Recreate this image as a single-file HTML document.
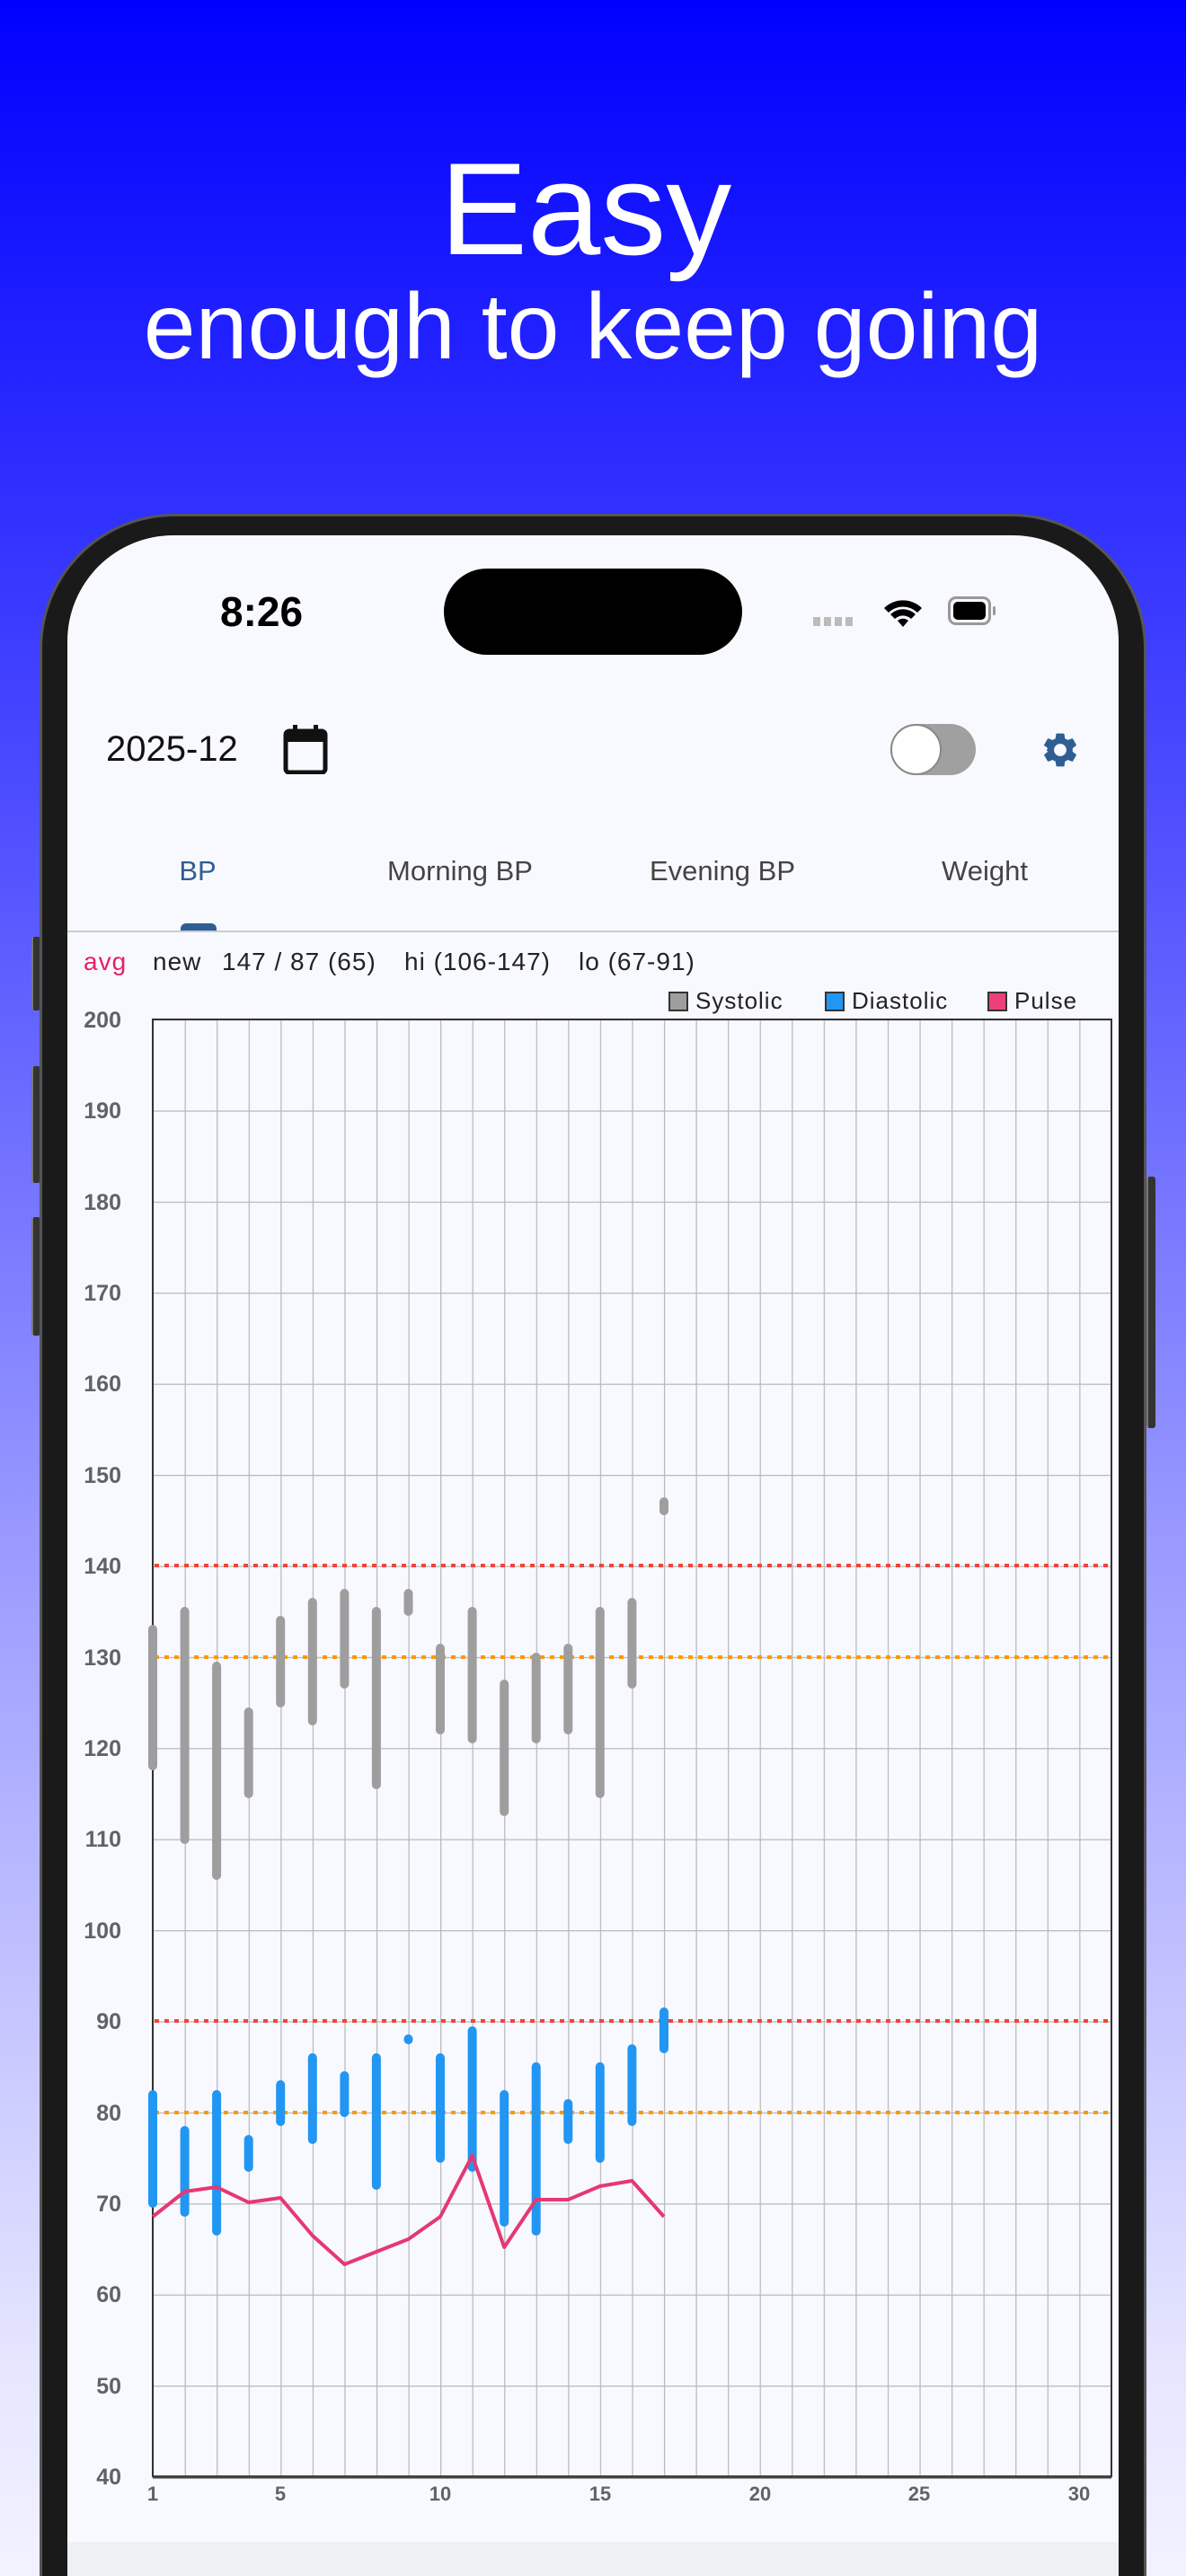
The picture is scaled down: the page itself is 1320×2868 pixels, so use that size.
<!DOCTYPE html>
<html style="width:1320px;height:2868px;overflow:hidden"><head><meta charset="utf-8"><style>
*{margin:0;padding:0;box-sizing:border-box}
html,body{width:1320px;height:2868px;overflow:hidden}
body{position:relative;background:#fff;font-family:"Liberation Sans",sans-serif}
.bg{position:absolute;left:0;top:0;width:1320px;height:2868px;background:linear-gradient(180deg,#0000ff 0%,#4a4aff 30%,#9a9aff 60%,#e6e6ff 92%,#f2f2ff 100%)}
.h1{position:absolute;left:0;width:1320px;text-align:center;color:#fff;font-weight:300}
.frame{position:absolute;left:44px;top:572px;width:1232px;height:2296px;border-radius:150px 150px 0 0;background:#1a1a1a;border:3px solid #555;border-bottom:none}
.screen{position:absolute;left:75px;top:596px;width:1170px;height:2272px;border-radius:118px 118px 0 0;background:#f8f9fe;overflow:hidden}
.btn{position:absolute;left:35px;width:10px;background:#333;border-radius:3px;border-left:2px solid #777}
.t{position:absolute;white-space:nowrap}
.lg{position:absolute;top:1099px;font-size:26px;color:#222;letter-spacing:1px;white-space:nowrap}
.lg i{display:inline-block;width:22px;height:22px;border:2px solid #333;vertical-align:-3px;margin-right:8px}
</style></head><body>
<div class="bg"></div>
<div class="h1" style="top:148px;font-size:146px;line-height:170px;left:-8px">Easy</div>
<div class="h1" style="top:304px;font-size:104px;line-height:120px">enough to keep going</div>
<div class="btn" style="top:1043px;height:82px"></div>
<div class="btn" style="top:1187px;height:130px"></div>
<div class="btn" style="top:1355px;height:132px"></div>
<div class="btn" style="left:1276px;top:1310px;height:280px"></div>
<div class="frame"></div>
<div class="screen">
 <div class="t" style="left:170px;top:58px;font-size:46px;font-weight:bold;color:#000">8:26</div>
 <div style="position:absolute;left:419px;top:37px;width:332px;height:96px;border-radius:48px;background:#000"></div>
 <div style="position:absolute;left:830px;top:91px;width:44px;height:10px;background:repeating-linear-gradient(90deg,#bbb 0 8px,transparent 8px 12px)"></div>
 <svg style="position:absolute;left:905px;top:66px" width="50" height="38" viewBox="0 0 50 38"><path d="M25 36 L19 29 A9 9 0 0 1 31 29 Z M4 15 A30 30 0 0 1 46 15 L41 20 A23 23 0 0 0 9 20Z M11 22 A20 20 0 0 1 39 22 L34 27 A13 13 0 0 0 16 27Z" fill="#000"/></svg>
 <div style="position:absolute;left:980px;top:68px;width:48px;height:32px;border:3px solid #999;border-radius:9px;padding:3px"><div style="width:100%;height:100%;background:#000;border-radius:5px"></div></div>
 <div style="position:absolute;left:1030px;top:79px;width:3px;height:10px;background:#999;border-radius:2px"></div>

 <div class="t" style="left:43px;top:216px;font-size:40px;color:#111">2025-12</div>
 <svg style="position:absolute;left:240px;top:210px" width="50" height="56" viewBox="0 0 50 56"><rect x="3" y="8" width="44" height="46" rx="4" fill="none" stroke="#111" stroke-width="5"/><rect x="3" y="8" width="44" height="12" fill="#111"/><rect x="11" y="1" width="5" height="10" fill="#111"/><rect x="34" y="1" width="5" height="10" fill="#111"/></svg>
 <div style="position:absolute;left:916px;top:210px;width:95px;height:57px;border-radius:29px;background:#a0a0a0"></div>
 <div style="position:absolute;left:916px;top:210px;width:57px;height:57px;border-radius:50%;background:#fff;border:2px solid #888"></div>
 <svg style="position:absolute;left:1082px;top:216px" width="46" height="46" viewBox="0 0 24 24"><path fill="#2f5e92" d="M19.14 12.94c.04-.3.06-.61.06-.94 0-.32-.02-.64-.07-.94l2.03-1.58a.49.49 0 0 0 .12-.61l-1.920-3.32a.49.49 0 0 0-.59-.22l-2.39.96c-.5-.38-1.030-.7-1.62-.94l-.36-2.54a.48.48 0 0 0-.48-.41h-3.840c-.24 0-.43.17-.47.41l-.36 2.54c-.59.24-1.130.57-1.62.94l-2.39-.96a.48.48 0 0 0-.59.22L2.74 8.87c-.12.21-.8.47.12.61l2.03 1.58c-.5.3-.7.62-.7.94s.2.64.7.94l-2.03 1.58a.49.49 0 0 0-.12.61l1.92 3.32c.12.22.37.29.59.22l2.39-.96c.5.38 1.03.7 1.62.94l.36 2.54c.5.24.24.41.48.41h3.84c.24 0 .44-.17.47-.41l.36-2.54c.59-.24 1.13-.56 1.62-.94l2.39.96c.22.08.47 0 .59-.22l1.92-3.32c.12-.22.07-.47-.12-.61l-2.01-1.58zM12 15.6A3.6 3.6 0 1 1 12 8.4a3.6 3.6 0 0 1 0 7.2z"/></svg>

 <div class="t" style="left:0;width:290px;text-align:center;top:356px;font-size:31px;color:#2f5e92">BP</div>
 <div class="t" style="left:292px;width:290px;text-align:center;top:356px;font-size:31px;color:#444">Morning BP</div>
 <div class="t" style="left:584px;width:290px;text-align:center;top:356px;font-size:31px;color:#444">Evening BP</div>
 <div class="t" style="left:876px;width:290px;text-align:center;top:356px;font-size:31px;color:#444">Weight</div>
 <div style="position:absolute;left:126px;top:432px;width:40px;height:10px;border-radius:6px 6px 0 0;background:#2f5e92"></div>
 <div style="position:absolute;left:0;top:440px;width:1170px;height:2px;background:#c8ccd2"></div>

 <div class="t" style="left:18px;top:459px;font-size:28px;color:#e91e63;letter-spacing:1px">avg</div>
 <div class="t" style="left:95px;top:459px;font-size:28px;color:#222;letter-spacing:1px">new</div>
 <div class="t" style="left:172px;top:459px;font-size:28px;color:#222;letter-spacing:1px">147 / 87 (65)</div>
 <div class="t" style="left:375px;top:459px;font-size:28px;color:#222;letter-spacing:1px">hi (106-147)</div>
 <div class="t" style="left:569px;top:459px;font-size:28px;color:#222;letter-spacing:1px">lo (67-91)</div>
 <div style="position:absolute;left:0;top:2234px;width:1170px;height:38px;background:#eef0f4"></div>
</div>
<div class="lg" style="left:744px"><i style="background:#9e9e9e"></i>Systolic</div>
<div class="lg" style="left:918px"><i style="background:#2196f3"></i>Diastolic</div>
<div class="lg" style="left:1099px"><i style="background:#ec407a"></i>Pulse</div>
<svg style="position:absolute;left:0;top:0" width="1320" height="2868">
<defs><pattern id="g" x="170" y="1135" width="35.56" height="101.4" patternUnits="userSpaceOnUse"><line x1="0.5" y1="0" x2="0.5" y2="101.4" stroke="#b8b8bc" stroke-width="1.5"/><line x1="0" y1="0.5" x2="35.56" y2="0.5" stroke="#b8b8bc" stroke-width="1.5"/></pattern></defs>
<rect x="170" y="1135" width="1067" height="1622" fill="url(#g)"/>
<rect x="170" y="1135" width="1067" height="1622" fill="none" stroke="#333" stroke-width="2"/>
<line x1="170" y1="2758" x2="1237" y2="2758" stroke="#444" stroke-width="3"/>
<g font-family="Liberation Sans" font-size="25" font-weight="bold" fill="#5f6368" text-anchor="end">
<text x="135" y="1144">200</text><text x="135" y="1245">190</text><text x="135" y="1347">180</text><text x="135" y="1448">170</text><text x="135" y="1549">160</text><text x="135" y="1651">150</text><text x="135" y="1752">140</text><text x="135" y="1854">130</text><text x="135" y="1955">120</text><text x="135" y="2056">110</text><text x="135" y="2158">100</text><text x="135" y="2259">90</text><text x="135" y="2361">80</text><text x="135" y="2462">70</text><text x="135" y="2563">60</text><text x="135" y="2665">50</text><text x="135" y="2766">40</text>
</g>
<g font-family="Liberation Sans" font-size="22" font-weight="bold" fill="#5f6368" text-anchor="middle">
<text x="170" y="2784">1</text><text x="312" y="2784">5</text><text x="490" y="2784">10</text><text x="668" y="2784">15</text><text x="846" y="2784">20</text><text x="1023" y="2784">25</text><text x="1201" y="2784">30</text>
</g>
<g stroke-width="4" stroke-dasharray="5 6">
<line x1="172" y1="1743" x2="1235" y2="1743" stroke="#f44336"/>
<line x1="172" y1="1845" x2="1235" y2="1845" stroke="#ff9800"/>
<line x1="172" y1="2250" x2="1235" y2="2250" stroke="#f44336"/>
<line x1="172" y1="2352" x2="1235" y2="2352" stroke="#ff9800"/>
</g>
<g stroke="#9e9e9e" stroke-width="10" stroke-linecap="round">
<line x1="170" y1="1814" x2="170" y2="1966"/><line x1="205.6" y1="1794" x2="205.6" y2="2048"/><line x1="241.1" y1="1855" x2="241.1" y2="2088"/><line x1="276.7" y1="1906" x2="276.7" y2="1997"/><line x1="312.2" y1="1804" x2="312.2" y2="1896"/><line x1="347.8" y1="1784" x2="347.8" y2="1916"/><line x1="383.4" y1="1774" x2="383.4" y2="1875"/><line x1="418.9" y1="1794" x2="418.9" y2="1987"/><line x1="454.5" y1="1774" x2="454.5" y2="1794"/><line x1="490" y1="1835" x2="490" y2="1926"/><line x1="525.6" y1="1794" x2="525.6" y2="1936"/><line x1="561.2" y1="1875" x2="561.2" y2="2017"/><line x1="596.7" y1="1845" x2="596.7" y2="1936"/><line x1="632.3" y1="1835" x2="632.3" y2="1926"/><line x1="667.8" y1="1794" x2="667.8" y2="1997"/><line x1="703.4" y1="1784" x2="703.4" y2="1875"/><line x1="739" y1="1672" x2="739" y2="1682"/>
</g>
<g stroke="#2196f3" stroke-width="10" stroke-linecap="round">
<line x1="170" y1="2332" x2="170" y2="2453"/><line x1="205.6" y1="2372" x2="205.6" y2="2463"/><line x1="241.1" y1="2332" x2="241.1" y2="2484"/><line x1="276.7" y1="2382" x2="276.7" y2="2413"/><line x1="312.2" y1="2321" x2="312.2" y2="2362"/><line x1="347.8" y1="2291" x2="347.8" y2="2382"/><line x1="383.4" y1="2311" x2="383.4" y2="2352"/><line x1="418.9" y1="2291" x2="418.9" y2="2433"/><line x1="454.5" y1="2270" x2="454.5" y2="2271"/><line x1="490" y1="2291" x2="490" y2="2403"/><line x1="525.6" y1="2261" x2="525.6" y2="2413"/><line x1="561.2" y1="2332" x2="561.2" y2="2474"/><line x1="596.7" y1="2301" x2="596.7" y2="2484"/><line x1="632.3" y1="2342" x2="632.3" y2="2382"/><line x1="667.8" y1="2301" x2="667.8" y2="2403"/><line x1="703.4" y1="2281" x2="703.4" y2="2362"/><line x1="739" y1="2240" x2="739" y2="2281"/>
</g>
<polyline fill="none" stroke="#e53873" stroke-width="4" stroke-linejoin="round" points="170,2468 205.6,2440 241.1,2435 276.7,2452 312.2,2447 347.8,2489 383.4,2521 418.9,2507 454.5,2493 490,2468 525.6,2400 561.2,2502 596.7,2449 632.3,2449 667.8,2434 703.4,2428 739,2468"/>
</svg>
</body></html>
